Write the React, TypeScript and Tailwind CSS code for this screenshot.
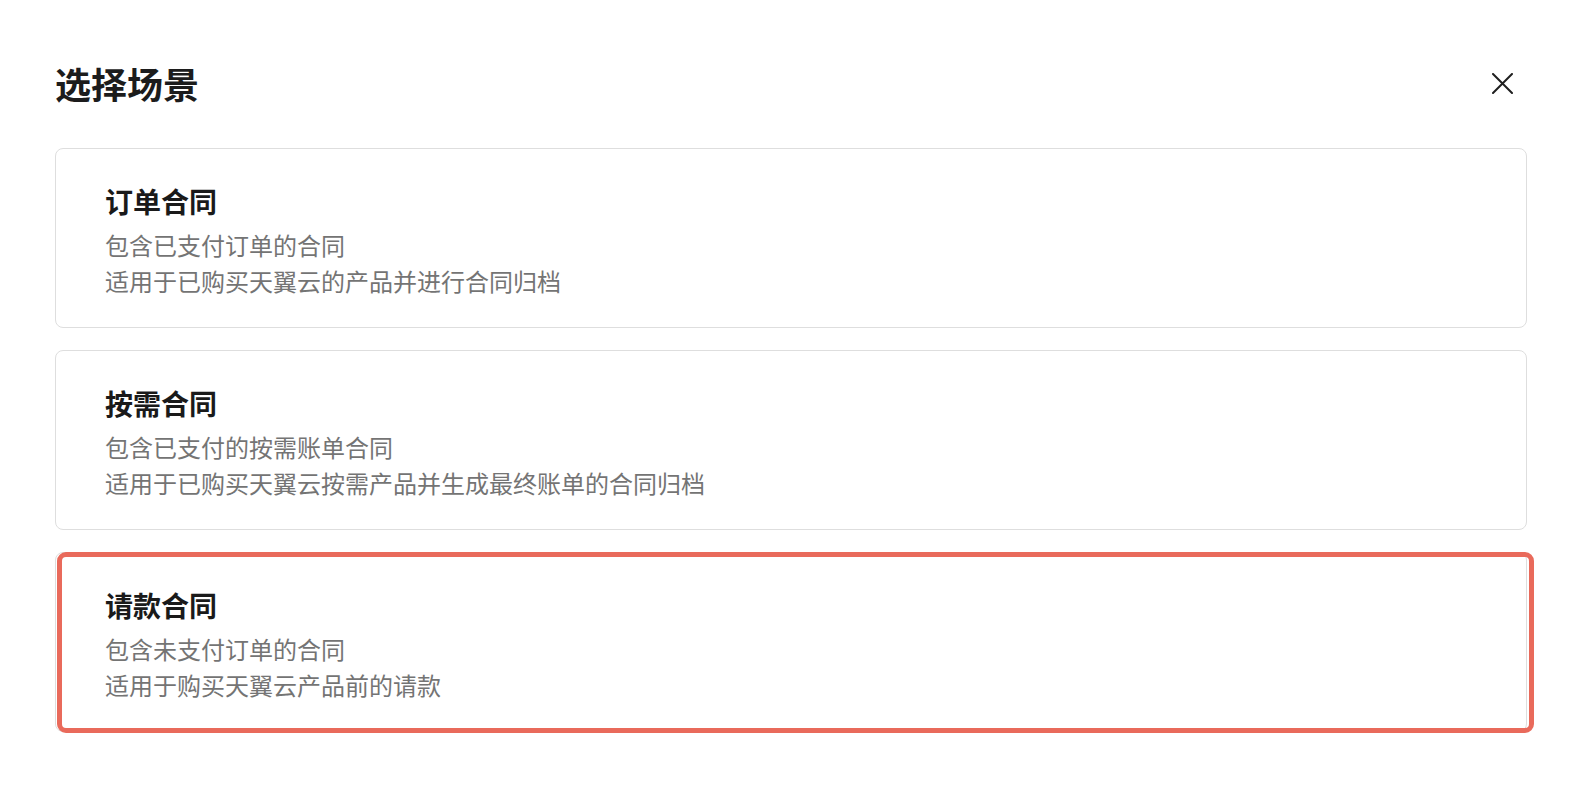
import React from "react";

const cards = [
  {
    title: "订单合同",
    lines: ["包含已支付订单的合同", "适用于已购买天翼云的产品并进行合同归档"],
    selected: false,
  },
  {
    title: "按需合同",
    lines: ["包含已支付的按需账单合同", "适用于已购买天翼云按需产品并生成最终账单的合同归档"],
    selected: false,
  },
  {
    title: "请款合同",
    lines: ["包含未支付订单的合同", "适用于购买天翼云产品前的请款"],
    selected: true,
  },
];

export default function App() {
  return (
    <div
      className="w-[1590px] h-[792px] bg-white pl-[55px] pr-[63px] pt-[58px]"
      style={{ fontFamily: '"Noto Sans CJK SC", "Noto Sans", sans-serif' }}
    >
      <div className="flex items-center justify-between h-[50px]">
        <h1 className="text-[36px] leading-[50px] font-bold text-[#1c1c1c]">选择场景</h1>
        <button className="mr-[14px] w-[21px] h-[21px] flex items-center justify-center">
          <svg width="21" height="21" viewBox="0 0 21 21" fill="none">
            <path d="M1 1L20 20M20 1L1 20" stroke="#1f1f1f" strokeWidth="2" strokeLinecap="round" />
          </svg>
        </button>
      </div>
      <div className="mt-[40px] flex flex-col gap-[22px]">
        {cards.map((c) => (
          <div
            key={c.title}
            className="relative h-[180px] rounded-[8px] border border-[#dedede] bg-white pl-[49px] pt-[32px]"
          >
            <div className="text-[28px] leading-[40px] font-bold text-[#1a1a1a]">{c.title}</div>
            <div className="mt-[6px] text-[24px] leading-[36px] text-[#747474]">
              {c.lines.map((l) => (
                <div key={l}>{l}</div>
              ))}
            </div>
            {c.selected && (
              <div className="absolute left-[1px] top-[-1px] right-[-8px] bottom-[-2px] rounded-[9px] border-[5px] border-[#e96a5b] pointer-events-none" />
            )}
          </div>
        ))}
      </div>
    </div>
  );
}
